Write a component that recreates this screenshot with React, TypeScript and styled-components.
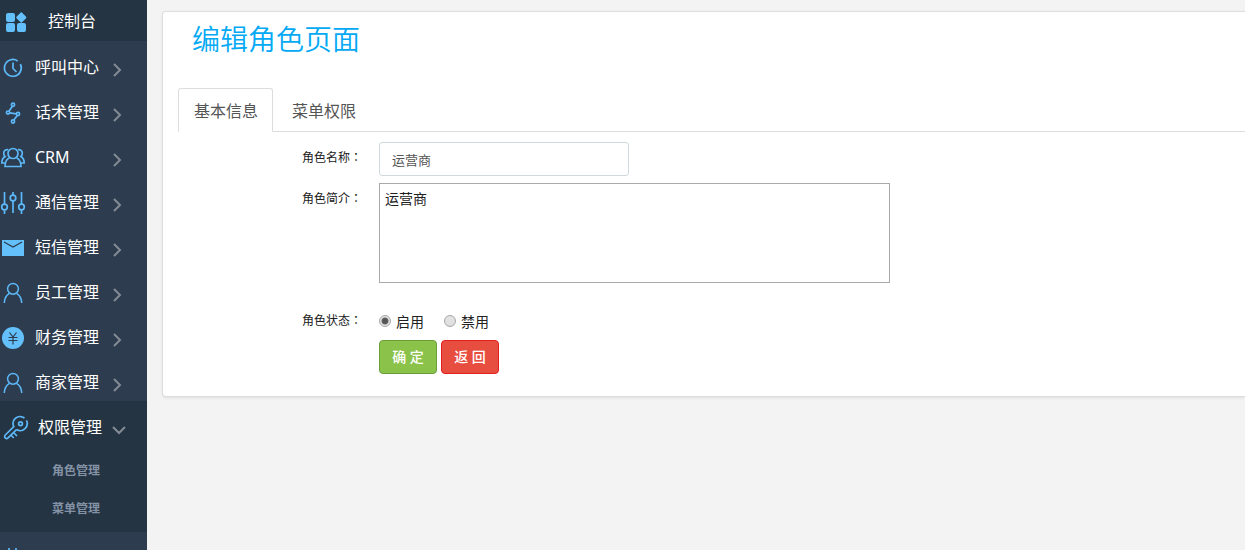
import React from "react";
import styled, { createGlobalStyle, css } from "styled-components";

const GlobalStyle = createGlobalStyle`
  *, *::before, *::after { box-sizing: border-box; }
  body {
    margin: 0;
    background: #f3f3f3;
    color: #212121;
    font: 14px/20px "Noto Sans", "Noto Sans CJK SC", sans-serif;
  }
  ul { list-style: none; margin: 0; padding: 0; }
  a { color: inherit; text-decoration: none; }
  button, input, textarea { font-family: inherit; }
`;

const Layout = styled.div`
  display: flex;
  height: 100vh;
  overflow: hidden;
`;

const Sidebar = styled.nav`
  flex: 0 0 147px;
  background: #2d3c4e;
  color: #fff;
  overflow: hidden;
`;

const HomeLink = styled.a`
  display: flex;
  align-items: center;
  height: 41px;
  padding-left: 2px;
  gap: 20px;
  background: #253443;
  font-size: 16px;
`;

const MenuGroup = styled.li<{ $open?: boolean }>`
  background: ${(p) => (p.$open ? "#253443" : "transparent")};
`;

const MenuLink = styled.a<{ $open?: boolean }>`
  display: flex;
  align-items: center;
  height: 45px;
  padding: 6px 21px 0 ${(p) => (p.$open ? 3 : 0)}px;
  gap: 9px;
  font-size: 16px;
`;

const MenuText = styled.span`
  flex: 1;
  white-space: nowrap;
`;

const MenuIcon = styled.svg`
  flex: none;
  width: 26px;
  height: 26px;
  margin-top: 3px;
  fill: none;
  stroke: #5cb8f8;
  stroke-width: 1.7;
`;

const Arrow = styled.svg`
  flex: none;
  width: 16px;
  height: 16px;
  margin-top: 6px;
  fill: none;
  stroke: #838b95;
  stroke-width: 2;
`;

const SubMenu = styled.ul`
  && { padding: 6px 0 4px; }
`;

const SubLink = styled.a`
  display: flex;
  align-items: center;
  height: 38px;
  padding-left: 52px;
  color: #8492a6;
  font-size: 12px;
  font-weight: 600;
`;

const Main = styled.main`
  flex: 1;
  min-width: 0;
  padding: 12px 0 12px 16px;
`;

const Card = styled.section`
  padding: 8px 0 22px 15px;
  background: #fff;
  border-radius: 3px 0 0 3px;
  box-shadow: 0 0 1px 1px #dcdcdc, 0 2px 3px #e0e0e0;
`;

const Title = styled.h1`
  margin: 0 0 30px 14px;
  color: #03a9f4;
  font-size: 28px;
  font-weight: 350;
  line-height: 38px;
`;

const Tabs = styled.div`
  display: flex;
  border-bottom: 1px solid #ddd;
`;

const Tab = styled.button<{ $active?: boolean }>`
  height: 44px;
  margin: 0 3px -1px 0;
  padding: 0 14px 0 15px;
  border: 1px solid transparent;
  border-radius: 3px 3px 0 0;
  background: transparent;
  color: #555;
  font-size: 16px;
  ${(p) =>
    p.$active &&
    css`
      border-color: #ddd;
      border-bottom-color: #fff;
      background: #fff;
    `}
`;

const Form = styled.form`
  display: grid;
  grid-template-columns: 184px 1fr;
  column-gap: 17px;
  padding-top: 10px;
`;

const labelStyle = css`
  padding-top: 6px;
  font-size: 12px;
  text-align: right;
`;

const Label = styled.label`
  ${labelStyle}
`;

const GroupLabel = styled.span`
  ${labelStyle}
`;

const Colon = styled.span`
  font-family: "Noto Sans CJK TC", sans-serif;
  line-height: 1;
`;

const Field = styled.div`
  min-width: 0;
`;

const TextInput = styled.input`
  display: block;
  width: 250px;
  max-width: 100%;
  height: 34px;
  margin-bottom: 7px;
  padding: 0 12px;
  border: 1px solid #cfdadd;
  border-radius: 3px;
  color: #555;
  font-size: 13px;
`;

const TextArea = styled.textarea`
  display: block;
  width: 511px;
  max-width: 100%;
  height: 100px;
  margin-bottom: 22px;
  padding: 5px;
  border: 1px solid #a9a9a9;
  color: #212121;
  font-size: 14px;
  line-height: 20px;
  resize: none;
`;

const RadioRow = styled.div`
  display: flex;
  gap: 20px;
  height: 35px;
  padding-top: 7px;
`;

const RadioLabel = styled.label`
  display: flex;
  gap: 5px;
`;

const Radio = styled.input`
  appearance: none;
  width: 12px;
  height: 12px;
  margin: 3px 0 0;
  border: 1px solid #a6a6a6;
  border-radius: 50%;
  background: linear-gradient(#e4e4e4, #dedede);
  &:checked {
    background: radial-gradient(circle, #555 0 2px, #666 3px, #e4e4e4 4px);
  }
`;

const Actions = styled.div`
  display: flex;
  gap: 4px;
  grid-column: 2;
`;

const ActionButton = styled.button<{ $danger?: boolean }>`
  width: 58px;
  height: 34px;
  padding: 0 0 2px;
  border: 1px solid ${(p) => (p.$danger ? "#e31f1f" : "#689f38")};
  border-radius: 4px;
  background: ${(p) => (p.$danger ? "#e84e40" : "#8bc34a")};
  color: #fff;
  font-size: 14px;
  font-weight: 500;
`;

const icons: Record<string, React.ReactNode> = {
  home: (
    <g fill="#63c0fb" stroke="none">
      <rect x="4" y="4" width="9" height="9" rx="2" />
      <rect x="4" y="14" width="9" height="9" rx="2" />
      <rect x="15" y="14" width="9" height="9" rx="2" />
      <rect x="15.300" y="4.500" width="8" height="8" rx="1.500" transform="rotate(45 19.300 8.500)" />
    </g>
  ),
  clock: (
    <>
      <path d="M17.800 6.100A8.400 8.400 0 1 0 20.400 9.200" />
      <path d="M13 7.500v6l3.500 3.500" />
    </>
  ),
  nodes: (
    <>
      <circle cx="13" cy="4.800" r="1.600" />
      <circle cx="8" cy="12.600" r="1.600" />
      <circle cx="18" cy="14" r="1.600" />
      <circle cx="13" cy="21.500" r="1.600" />
      <path d="M12.300 6.300 9 11.200M9.700 12.800l6.700 1M17.300 15.500l-3.500 4.600" />
    </>
  ),
  people: (
    <>
      <circle cx="13" cy="8.500" r="5" />
      <path d="M9.500 12.700C6.500 14 5 17 5 21.500h16c0-4.500-1.500-7.500-4.500-8.800M8 4.600C5.500 4.300 3.700 6 3.700 8.300c0 1.500.6 2.600 1.500 3.300C3 12.800 1.800 15 1.800 18H5M18 4.600c2.500-.3 4.300 1.400 4.300 3.700 0 1.500-.6 2.600-1.500 3.300 2.200 1.200 3.400 3.400 3.400 6.400H21" />
    </>
  ),
  sliders: (
    <>
      <path d="M4.500 2v12M4.500 20v4M13 2v3M13 11v12M21.500 2v12M21.500 20v4" />
      <circle cx="4.500" cy="17" r="2.800" />
      <circle cx="13" cy="8" r="2.800" />
      <circle cx="21.500" cy="17" r="2.800" />
    </>
  ),
  mail: (
    <>
      <rect x="2" y="5" width="22" height="16" fill="#63c0fb" stroke="none" />
      <path d="m4 7 9 5 9-5" stroke="#2d3c4e" strokeWidth="1.300" />
    </>
  ),
  person: (
    <g strokeWidth="1.500">
      <circle cx="13" cy="8.800" r="5.400" />
      <path d="M4.300 23c.2-4.700 2-8 5.200-9.700M21.700 23c-.2-4.700-2-8-5.200-9.700" />
    </g>
  ),
  yen: (
    <>
      <circle cx="13" cy="13" r="11" fill="#63c0fb" stroke="none" />
      <path d="m9.500 7.500 3.500 4.500 3.500-4.500M13 12v7.500M8.500 12.500h9M8.500 15.500h9" stroke="#2d3c4e" strokeWidth="1.200" />
    </>
  ),
  key: (
    <>
      <path d="M21.500 3C18.500.8 14.500 1.200 12 3.700c-2.200 2.200-2.500 5.300-1.200 7.900L2.300 20c-.9.900-.9 2.100-.1 2.900.8.800 2 .8 2.900-.1l2-2M13.500 14.600c2.800 1.600 6.300 1.200 8.500-1 2.300-2.300 2.800-5.600 1.500-8.300M13.500 14.600 7.100 20.800" />
      <circle cx="17.500" cy="8.800" r="1.900" />
      <path d="m10.500 17.500 3.500 3.500M7.800 20l3 3" />
    </>
  ),
  tools: (
    <>
      <path d="M9 2v6M16 2v6" />
      <circle cx="13" cy="15" r="7" />
    </>
  ),
};

const items: { text?: string; icon: string; children?: string[] }[] = [
  { text: "呼叫中心", icon: "clock" },
  { text: "话术管理", icon: "nodes" },
  { text: "CRM", icon: "people" },
  { text: "通信管理", icon: "sliders" },
  { text: "短信管理", icon: "mail" },
  { text: "员工管理", icon: "person" },
  { text: "财务管理", icon: "yen" },
  { text: "商家管理", icon: "person" },
  { text: "权限管理", icon: "key", children: ["角色管理", "菜单管理"] },
  { icon: "tools" },
];

export default function App() {
  return (
    <Layout>
      <GlobalStyle />
      <Sidebar>
        <HomeLink href="#">
          <MenuIcon viewBox="0 0 26 26">{icons.home}</MenuIcon>
          控制台
        </HomeLink>
        <ul>
          {items.map(({ text, icon, children }) => (
            <MenuGroup key={text ?? icon} $open={!!children}>
              <MenuLink href="#" $open={!!children}>
                <MenuIcon viewBox="0 0 26 26">{icons[icon]}</MenuIcon>
                <MenuText>{text}</MenuText>
                <Arrow viewBox="0 0 16 16">
                  <path d={children ? "m2 5 6 6 6-6" : "m4 2 6 6-6 6"} />
                </Arrow>
              </MenuLink>
              {children && (
                <SubMenu>
                  {children.map((child) => (
                    <li key={child}>
                      <SubLink href="#">{child}</SubLink>
                    </li>
                  ))}
                </SubMenu>
              )}
            </MenuGroup>
          ))}
        </ul>
      </Sidebar>
      <Main>
        <Card>
          <Title>编辑角色页面</Title>
          <Tabs role="tablist">
            <Tab type="button" role="tab" aria-selected="true" $active>
              基本信息
            </Tab>
            <Tab type="button" role="tab" aria-selected="false">
              菜单权限
            </Tab>
          </Tabs>
          <Form>
            <Label htmlFor="role-name">
              角色名称<Colon>：</Colon>
            </Label>
            <Field>
              <TextInput id="role-name" defaultValue="运营商" />
            </Field>
            <Label htmlFor="role-intro">
              角色简介<Colon>：</Colon>
            </Label>
            <Field>
              <TextArea id="role-intro" defaultValue="运营商" />
            </Field>
            <GroupLabel id="role-status">
              角色状态<Colon>：</Colon>
            </GroupLabel>
            <RadioRow role="radiogroup" aria-labelledby="role-status">
              <RadioLabel>
                <Radio type="radio" name="status" defaultChecked />
                启用
              </RadioLabel>
              <RadioLabel>
                <Radio type="radio" name="status" />
                禁用
              </RadioLabel>
            </RadioRow>
            <Actions>
              <ActionButton type="button">确 定</ActionButton>
              <ActionButton type="button" $danger>
                返 回
              </ActionButton>
            </Actions>
          </Form>
        </Card>
      </Main>
    </Layout>
  );
}
